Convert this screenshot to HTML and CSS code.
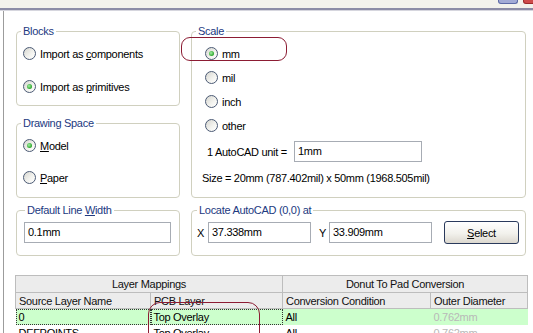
FILE: index.html
```html
<!DOCTYPE html>
<html lang="en">
<head>
  <meta charset="UTF-8">
  <title>Import AutoCAD</title>
  <link rel="stylesheet" href="styles.css">
</head>
<body>

  <!-- TITLE STRIP -->
  <div class="titlebar">
    <span class="tbtn tbtn-help"></span>
    <span class="tbtn tbtn-close"></span>
  </div>

  <div class="dialog">

    <!-- TOP GROUPS -->
    <div class="top-grid">
      <div class="group g-blocks">
        <div class="legend">Blocks</div>
        <div class="radios r-blocks">
          <label class="radio"><span class="dot"></span><span>Import as <u>c</u>omponents</span></label>
          <label class="radio on"><span class="dot"></span><span>Import as <u>p</u>rimitives</span></label>
        </div>
      </div>

      <div class="group g-space">
        <div class="legend">Drawing Space</div>
        <div class="radios r-space">
          <label class="radio on"><span class="dot"></span><span><u>M</u>odel</span></label>
          <label class="radio"><span class="dot"></span><span><u>P</u>aper</span></label>
        </div>
      </div>

      <div class="group g-scale">
        <div class="legend">Scale</div>
        <div class="radios r-scale">
          <label class="radio on"><span class="dot"></span><span>mm</span></label>
          <label class="radio"><span class="dot"></span><span>mil</span></label>
          <label class="radio"><span class="dot"></span><span>inch</span></label>
          <label class="radio"><span class="dot"></span><span>other</span></label>
        </div>
        <div class="unit-row">
          <span class="unit-label">1 AutoCAD unit =</span>
          <div class="field f-unit">1mm</div>
        </div>
        <div class="size-line">Size = 20mm (787.402mil) x 50mm (1968.505mil)</div>
        <div class="mark mark-mm"></div>
      </div>
    </div>

    <!-- BOTTOM GROUPS -->
    <div class="bottom-grid">
      <div class="group">
        <div class="legend legend-wide">Default Line <u>W</u>idth</div>
        <div class="field f-width">0.1mm</div>
      </div>

      <div class="group">
        <div class="legend legend-mid">Locate AutoCAD (0,0) at</div>
        <div class="locate-row">
          <span class="axis ax-x">X</span>
          <div class="field f-coord">37.338mm</div>
          <span class="axis ax-y">Y</span>
          <div class="field f-coord">33.909mm</div>
          <button class="btn"><u>S</u>elect</button>
        </div>
      </div>
    </div>

    <!-- MAPPINGS TABLE -->
    <div class="table-wrap">
      <table class="grid">
        <colgroup>
          <col class="c1"><col class="c2"><col class="c3"><col class="c4">
        </colgroup>
        <tr class="band">
          <th colspan="2" class="center">Layer Mappings</th>
          <th colspan="2" class="center">Donut To Pad Conversion</th>
        </tr>
        <tr class="heads">
          <th>Source Layer Name</th>
          <th>PCB Layer</th>
          <th>Conversion Condition</th>
          <th>Outer Diameter</th>
        </tr>
        <tr class="row sel">
          <td class="focus">0</td>
          <td class="focus">Top Overlay</td>
          <td>All</td>
          <td class="muted">0.762mm</td>
        </tr>
        <tr class="row">
          <td>DEFPOINTS</td>
          <td>Top Overlay</td>
          <td>All</td>
          <td class="muted">0.762mm</td>
        </tr>
      </table>
      <div class="mark mark-layer"></div>
    </div>

  </div>

</body>
</html>
```

FILE: styles.css
```css
/* RESET + BASE */
* { margin: 0; padding: 0; box-sizing: border-box; }
body {
  font-family: "Liberation Sans", Arial, sans-serif;
  font-size: 11px;
  letter-spacing: -0.3px;
  color: #000;
  background: #fff;
  width: 533px;
  height: 333px;
  overflow: hidden;
}
u { text-decoration: underline; text-underline-offset: 1px; }

/* TITLE STRIP */
.titlebar {
  height: 11px;
  background: linear-gradient(#f3f2ec 0 8px, #8c8ca6 8px 10px, #d6d6de 10px);
  display: flex;
  justify-content: flex-end;
  gap: 5px;
}
.tbtn {
  height: 4px;
  border-radius: 0 0 3px 3px;
}
.tbtn-help {
  width: 20px;
  background: #a3abd6;
  border: 1px solid #5d6aa6;
  border-top: none;
}
.tbtn-close {
  width: 12px;
  margin-right: -2px;
  background: #cf4b4b;
  border: 1px solid #9b2a2a;
  border-top: none;
}

/* DIALOG */
.dialog {
  margin-left: 3px;
  border-left: 1px solid #9c9c9c;
  padding: 20px 0 0 12px;
  height: 322px;
}

.top-grid {
  display: grid;
  grid-template-columns: 164px 335px;
  grid-template-rows: 75px 75px;
  column-gap: 11px;
  row-gap: 17px;
}
.g-scale {
  grid-column: 2;
  grid-row: 1 / 3;
  position: relative;
}

.bottom-grid {
  display: grid;
  grid-template-columns: 164px 335px;
  grid-template-rows: 46px;
  column-gap: 11px;
  margin-top: 12px;
}

/* GROUP BOXES */
.group {
  border: 1px solid #d0d0bf;
  border-radius: 4px;
}
.legend {
  display: table;
  height: 13px;
  line-height: 13px;
  margin: -7px 0 0 4px;
  padding: 0 2px;
  background: #fff;
  color: #22397f;
}
.legend-wide { margin-left: 8px; }
.legend-mid { margin-left: 5px; }

/* RADIOS */
.radios {
  display: flex;
  flex-direction: column;
  margin-top: 9px;
}
.r-blocks { padding-left: 6px; gap: 20px; }
.r-space { padding-left: 6px; gap: 19px; }
.r-scale { padding-left: 13px; gap: 11px; }

.radio {
  display: flex;
  align-items: center;
  height: 13px;
  gap: 4px;
}
.dot {
  flex: none;
  position: relative;
  width: 13px;
  height: 13px;
  border-radius: 50%;
  border: 1px solid #4b5a74;
  background: linear-gradient(135deg, #d6d6d0, #f4f4f0 60%, #fff);
}
.radio.on .dot::after {
  content: "";
  position: absolute;
  left: 3px; top: 3px;
  width: 5px; height: 5px;
  border-radius: 50%;
  background: radial-gradient(circle at 40% 40%, #a6f0a6, #2aa52a 70%);
}

/* FIELDS */
.field {
  height: 21px;
  line-height: 19px;
  border: 1px solid #a7acb4;
  background: #fff;
  padding-left: 3px;
}
.unit-row {
  display: flex;
  align-items: center;
  margin-top: 9px;
  padding-left: 15px;
}
.unit-label { width: 87px; }
.f-unit { width: 128px; }
.size-line {
  margin-top: 10px;
  padding-left: 10px;
  line-height: 13px;
}
.f-width {
  width: 147px;
  margin: 5px 0 0 7px;
}

.locate-row {
  display: flex;
  align-items: center;
  margin-top: 4px;
  padding-left: 5px;
}
.axis { width: 11px; }
.ax-y { width: 10px; margin-left: 8px; }
.f-coord { width: 103px; }
.btn {
  width: 75px;
  height: 23px;
  margin-left: 12px;
  font: inherit;
  letter-spacing: inherit;
  color: #000;
  border: 1px solid #2a3a5c;
  border-radius: 3px;
  background: linear-gradient(#ffffff, #f2f1ec 55%, #dcd8cf);
}

/* TABLE */
.table-wrap {
  position: relative;
  width: 512px;
  margin: 19px 0 0 -1px;
}
.grid {
  width: 512px;
  border-collapse: collapse;
  table-layout: fixed;
}
.c1 { width: 135px; }
.c2 { width: 132px; }
.c3 { width: 148px; }
.c4 { width: 97px; }
.grid th {
  height: 17px;
  font-weight: normal;
  text-align: left;
  padding: 0 3px;
  color: #111;
  background: #ececec;
  border: 1px solid #bdbdbd;
  white-space: nowrap;
}
.grid th.center { text-align: center; }
.grid .heads th { height: 16px; }
.grid td {
  height: 16px;
  padding: 0 3px;
  white-space: nowrap;
}
.row.sel td { background: #ccffcc; }
.grid td.focus { outline: 1px dotted #333; outline-offset: -1px; }
.grid td.muted { color: #b8b8b8; }

/* RED ANNOTATIONS */
.mark {
  position: absolute;
  border: 1.5px solid #8c1c33;
  pointer-events: none;
}
.mark-mm {
  left: -11px;
  top: 5px;
  width: 106px;
  height: 24px;
  border-radius: 9px;
}
.mark-layer {
  left: 133px;
  top: 27px;
  width: 112px;
  height: 60px;
  border-radius: 12px;
}
```
